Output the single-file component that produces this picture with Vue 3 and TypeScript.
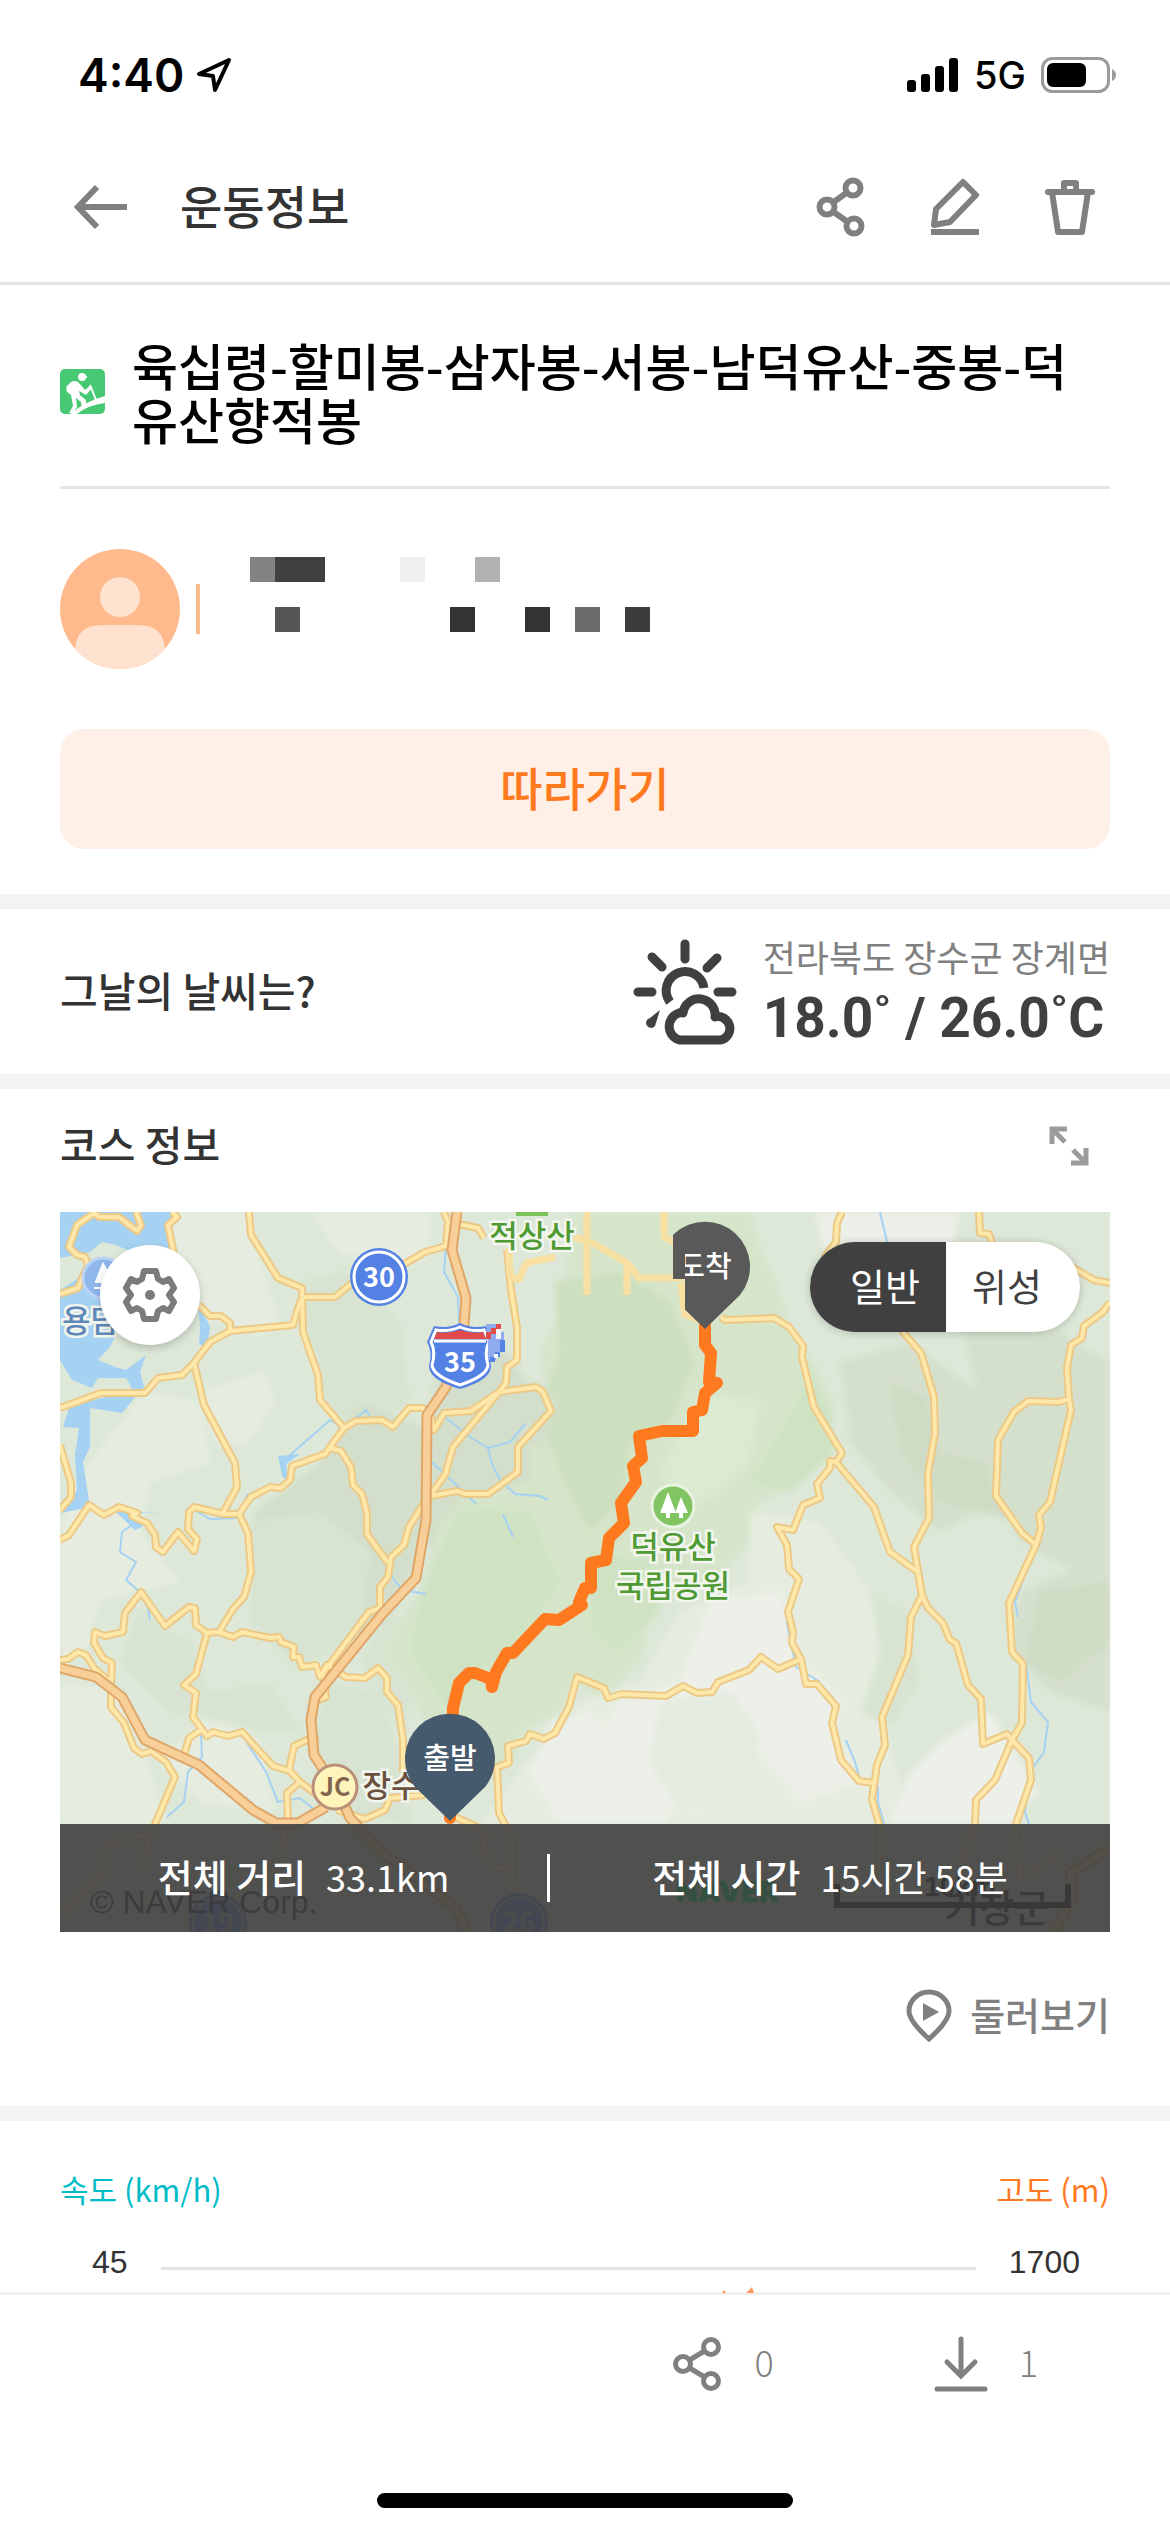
<script setup lang="ts">
import { ref } from 'vue'

type MapKind = 'normal' | 'satellite'

interface MaskCell {
  col: number
  span: number
  color: string
}

const title = '육십령-할미봉-삼자봉-서봉-남덕유산-중봉-덕유산향적봉'
const mapKind = ref<MapKind>('normal')

const maskRows: MaskCell[][] = [
  [
    { col: 3, span: 1, color: '#838383' },
    { col: 4, span: 2, color: '#404040' },
    { col: 9, span: 1, color: '#efefef' },
    { col: 12, span: 1, color: '#b2b2b2' },
  ],
  [
    { col: 4, span: 1, color: '#565656' },
    { col: 11, span: 1, color: '#333333' },
    { col: 14, span: 1, color: '#333333' },
    { col: 16, span: 1, color: '#6b6b6b' },
    { col: 18, span: 1, color: '#3c3c3c' },
  ],
]

const hills: { fill: string; points: string }[] = [
  { fill: '#e6ede0', points: '115,0 190,0 195,30 218,110 200,125 150,105 110,60' },
  { fill: '#e6ede0', points: '250,0 370,0 370,45 330,60 280,40' },
  { fill: '#e6ede0', points: '85,180 140,190 150,250 90,270 80,320 120,370 30,390 0,400 0,310 30,250' },
  { fill: '#e6ede0', points: '170,170 205,160 215,190 185,235 155,230 140,180' },
  { fill: '#e6ede0', points: '0,385 38,390 30,430 0,460' },
  { fill: '#e6ede0', points: '0,470 60,480 90,560 105,612 0,612' },
  { fill: '#e6ede0', points: '150,500 200,530 215,600 140,590 100,550' },
  { fill: '#d8e4d1', points: '240,70 300,55 340,110 350,190 300,220 262,190 250,130' },
  { fill: '#d3dfca', points: '300,190 365,215 365,320 335,400 300,430 240,390 190,330 195,300 260,250' },
  { fill: '#d8e4d1', points: '190,310 260,300 310,340 300,420 240,460 190,410' },
  { fill: '#d3dfca', points: '380,130 440,130 480,190 490,240 460,330 400,380 366,330 370,200' },
  { fill: '#d8e4d1', points: '80,400 130,430 150,480 210,470 240,520 180,515 110,500 60,450' },
  { fill: '#d8e4d1', points: '270,470 320,480 345,560 350,612 270,600 250,530' },
  { fill: '#d8e4d1', points: '330,400 360,450 345,520 300,450' },
  { fill: '#d6e5ca', points: '515,0 690,0 700,35 720,80 735,130 755,150 775,195 770,230 745,270 700,290 690,330 650,370 610,385 585,410 585,440 560,470 540,490 515,470 500,500 460,520 455,545 425,570 400,560 370,520 345,470 322,441 345,400 358,385 380,310 400,290 470,270 470,230 490,190 480,140 500,100' },
  { fill: '#ccdfbe', points: '495,70 560,60 610,90 635,150 610,210 570,230 560,290 530,320 500,260 480,200 500,140' },
  { fill: '#cfe3c3', points: '400,295 470,300 500,370 460,430 430,450 390,500 350,440 360,385' },
  { fill: '#cfe3c3', points: '750,165 770,200 775,240 730,280 690,270 720,220' },
  { fill: '#cfe3c3', points: '530,340 590,350 600,400 560,440 530,420' },
  { fill: '#dce9d3', points: '640,180 700,190 690,250 660,280 620,300 600,260' },
  { fill: '#d3dfca', points: '430,180 480,170 500,190 480,240 440,210' },
  { fill: '#edf0e8', points: '755,0 900,0 890,40 830,80 770,60' },
  { fill: '#d5e0cc', points: '780,150 850,130 920,180 960,240 940,290 880,320 830,280 790,230' },
  { fill: '#cfdbc4', points: '830,170 865,185 880,240 990,265 1050,240 1050,290 960,310 880,290 840,240' },
  { fill: '#d5e0cc', points: '900,110 1000,120 1050,150 1050,380 960,330 930,270 920,190' },
  { fill: '#d5e0cc', points: '960,380 1050,340 1050,500 990,480 950,440' },
  { fill: '#cfdbc4', points: '980,380 1050,370 1050,430 1000,470 965,450' },
  { fill: '#e6ede0', points: '690,300 760,310 810,380 850,420 820,490 850,612 420,612 460,560 520,490 580,470 620,400 690,370' },
  { fill: '#edf0e8', points: '650,390 720,380 735,440 780,490 770,520 800,570 740,590 700,540 640,600 560,600 520,550 560,490 620,470' },
  { fill: '#edf0e8', points: '490,510 530,500 570,540 610,612 500,612 470,560' },
  { fill: '#edf0e8', points: '850,560 880,530 930,500 980,580 950,612 830,612' },
  { fill: '#e4ebdf', points: '600,490 670,480 700,520 690,590 620,600 590,550' },
  { fill: '#d8e4d1', points: '810,380 850,400 860,470 830,515 800,500 820,440' },
]

const lakes: string[] = [
  '0,0 18,0 0,26',
  '18,0 112,0 108,15 113,36 104,46 72,40 56,33 42,30 30,40 0,46 0,26',
  '0,78 28,60 45,60 62,110 50,135 38,148 55,155 66,158 86,143 80,160 84,175 62,201 30,196 30,235 23,250 30,295 1,301 17,278 15,243 19,216 3,215 10,193 60,182 72,176 66,166 38,166 32,176 12,168 0,148',
  '138,90 150,115 147,135 139,132 140,115',
  '218,244 240,242 226,252 229,270 222,264',
  '100,300 56,300 75,318 88,312 78,301',
]

const streams: string[] = [
  '76,310 62,320 60,340 76,350 66,368 86,385 90,408',
  '188,282 180,300 175,306 150,307 138,300',
  '228,245 270,208 284,216 306,198 310,205',
  '386,206 410,225 428,236 450,230 465,212',
  '428,236 432,252 440,268 455,282 480,284 488,288',
  '386,34 384,60 398,85 399,112',
  '372,250 393,270 416,292',
  '443,302 453,325',
  '330,362 342,378 366,382',
  '184,526 206,560 218,590 240,586 262,604',
  '141,520 142,545 128,560 124,590 107,605',
  '820,0 827,30',
  '727,393 727,412 736,455 760,470',
  '786,528 795,550 800,568 818,575 818,590 824,612',
  '876,400 902,450 918,490 921,520',
  '974,340 966,360 955,390 958,405',
  '966,450 971,490 988,510 984,540 970,560 965,600 975,630 968,665',
]

const roads: string[] = [
  '76,0 81,13 77,19 59,5 39,5 34,1 17,13 9,35 17,43 25,45 28,53 18,76 0,82',
  '112,0 117,5 108,13 114,42',
  '139,93 150,104 161,104 170,111 170,119 233,113 240,90 244,85 275,85 292,71 346,51 365,40 386,34 388,10 384,0',
  '388,10 418,16 424,26',
  '189,0 191,23 218,66 242,76 243,120 258,163 260,188 284,216',
  '170,119 150,130 134,151 122,163 98,166 85,181 41,181 0,196',
  '134,151 144,193 175,251 177,275 163,301',
  '0,233 11,271 11,285 0,298',
  '0,328 9,323 29,293 44,303 59,295 77,301 72,304 87,311 95,323 96,335 103,340 118,320 134,339 137,327 128,317 129,300 134,295 163,302 179,302 191,285 210,275 221,276 230,268 232,254 265,242 284,216 296,209 322,208 333,215 349,196 363,196 371,205 374,218 384,201 411,199 439,180 476,175 483,180 491,199 458,235 458,260 428,282 405,282 397,279 371,284',
  '439,180 446,171 447,155 457,148 457,115 451,78 447,38',
  '439,180 393,235 385,263 363,293 349,315 344,333 331,345 328,365 320,375 320,396 309,400 263,461 266,485 258,488',
  '270,236 281,239 291,255 293,273 302,282 307,301 307,322 328,351',
  '179,302 188,321 191,360 184,385 173,397 159,420',
  '0,448 8,447 18,440 26,443 34,456 51,471 51,495 64,511 74,536 82,542 91,539 106,550 115,565 95,612 87,635 85,661',
  '0,703 43,661 47,634 74,625 89,623',
  '51,471 52,451 43,446 34,431 35,420 45,424 63,420 65,401 81,380 105,414 129,395 135,396 136,413 147,421 159,420 173,425 182,420 210,426 219,425 221,430 234,435 233,445 239,445 242,455 256,453 260,465 267,453 286,465 305,466 318,456 327,466 327,480 338,493 343,528 343,561',
  '147,421 136,462 124,473 136,481 133,505 141,516 147,524 153,520 168,524 182,520 213,554 230,559 240,570 260,585',
  '141,518 129,526 124,543',
  '258,523 234,534 229,558',
  '240,570 227,581 228,612 221,638 204,678',
  '277,598 305,607 325,598 330,586 365,583',
  '395,605 426,619 422,638 434,655 449,658 457,681',
  '453,668 453,628 439,601 437,555 449,551 448,534 466,529 470,522 484,527 495,521 509,495 517,465 544,476 548,486 562,482 606,484 623,474 637,481 652,480 658,470 689,458 701,445 718,457 741,447',
  '661,105 665,108 714,106 729,115 743,134 742,145 754,195 782,241 776,250 814,295 830,340 858,360 862,383',
  '776,250 770,249 770,256 757,272 760,286 743,293 733,318 717,315 727,333 729,357 739,367 728,400 733,420 732,431 741,447 746,472 757,472 776,494 772,511 781,548 799,569 814,571',
  '782,0 777,11 776,30 764,46',
  '835,108 843,120 861,141 874,185 875,221 868,261 869,306 854,335 862,383 851,405 848,443 822,505 825,533 817,553 812,587 819,612 819,658',
  '862,383 868,396 883,411 890,428 896,431 908,473 921,487 923,532 947,522 952,528 935,568 916,588 915,612 900,655',
  '919,0 920,21 929,22 935,40',
  '1010,54 1034,68 1050,71',
  '1050,90 1043,100 1024,114 1022,126 1011,133 1007,156 1009,187 1011,198 990,290 979,303 981,316 976,333 949,391 952,440 963,452 962,511 952,528 969,546 971,568 956,612 960,668',
  '1009,187 999,190 968,189 954,200 938,228 936,284 962,321 976,333',
  '960,665 995,645 1005,658',
]

const softRoads: string[] = [
  '527,0 527,83',
  '514,25 533,31 567,51 579,66 628,66',
  '567,51 567,83',
  '604,0 604,25 615,31',
  '621,71 625,103 640,108',
  '449,36 450,64 459,68 466,51 495,45',
]

const highways: string[] = [
  '397,0 392,38 406,86 404,113 386,175 367,203 366,308 356,366 323,401 255,485 251,508 254,543 265,560',
  '0,456 36,465 62,485 85,528 139,553 193,598 216,611 238,611 266,595',
  '283,590 290,606 323,641 395,695 407,720',
  '1050,636 1011,661 1011,688 994,720',
]

const route =
  '645,113 645,133 651,141 649,170 657,171 645,181 642,198 633,200 633,219 602,219 579,224 582,246 573,254 576,270 561,291 564,311 549,326 546,348 531,351 531,376 525,376 519,390 522,393 499,408 485,407 453,441 447,441 436,460 432,475 431,467 415,461 409,461 399,471 393,496 390,606'
</script>

<template>
  <div class="page">
    <div class="status">
      <div class="status-side">
        <span class="clock">4:40</span>
        <svg width="36" height="36" viewBox="0 0 36 36" fill="none" stroke="#000" stroke-width="4" stroke-linejoin="round">
          <path d="M33 3 L3 17 L17 19 L19 33 Z" />
        </svg>
      </div>
      <div class="status-side right">
        <svg width="52" height="36" viewBox="0 0 52 36">
          <rect x="0" y="23" width="9" height="12" rx="3" />
          <rect x="14" y="17" width="9" height="18" rx="3" />
          <rect x="28" y="9" width="9" height="26" rx="3" />
          <rect x="42" y="1" width="9" height="34" rx="3" />
        </svg>
        <span class="network">5G</span>
        <svg width="75" height="38" viewBox="0 0 75 38">
          <rect x="1.5" y="2.5" width="66" height="33" rx="10" fill="none" stroke="#9b9b9b" stroke-width="3" />
          <rect x="6" y="7" width="39" height="24" rx="6" />
          <path d="M71 13 q4 2 4 6 q0 4 -4 6 z" fill="#9b9b9b" />
        </svg>
      </div>
    </div>

    <header class="appbar">
      <button class="icon-btn" type="button" aria-label="뒤로">
        <svg width="54" height="46" viewBox="0 0 54 46" fill="none" stroke="#808080" stroke-width="6">
          <path d="M53 23 H4 M23 3 L4 23 L23 43" />
        </svg>
      </button>
      <h1>운동정보</h1>
      <div class="actions">
        <button class="icon-btn" type="button" aria-label="공유">
          <svg width="50" height="60" viewBox="0 0 50 60" fill="none" stroke="#808080" stroke-width="6">
            <circle cx="11" cy="30" r="7.5" /><circle cx="37" cy="11" r="7.5" /><circle cx="38" cy="49" r="7.5" />
            <path d="M17 25.500 L31 15.500 M17 34.500 L31 44.500" />
          </svg>
        </button>
        <button class="icon-btn" type="button" aria-label="편집">
          <svg width="50" height="60" viewBox="0 0 50 60" fill="none" stroke="#808080" stroke-width="6" stroke-linejoin="round">
            <path d="M33 5 L46 18 L20 45 L4 48 L6 32 Z" /><path d="M1 55 H49" />
          </svg>
        </button>
        <button class="icon-btn" type="button" aria-label="삭제">
          <svg width="52" height="60" viewBox="0 0 52 60" fill="none" stroke="#808080" stroke-width="6" stroke-linejoin="round" stroke-linecap="round">
            <path d="M4 15 H48 M8 15 L14 55 H38 L44 15 M20 14 V6 H32 V14" />
          </svg>
        </button>
      </div>
    </header>

    <main class="content">
      <section class="summary">
        <div class="title-row">
          <svg class="hiker" width="45" height="45" viewBox="0 0 45 45">
            <rect width="45" height="45" rx="5" fill="#47c872" />
            <circle cx="22" cy="8" r="4" fill="#fff" /><path d="M20 5 L27 7 V9 H20Z" fill="#fff" />
            <path d="M11 13 Q16 10 20 15 L25 21 L30 17 L32 19 L26 26 L19 22 L20 26 L26 31 L26 39 L22 41 L21 33 L16 29 L17 38 L13 44 L9 44 L13 37 L11 26 Q4 22 7 17 Z" fill="#fff" />
            <path d="M30 16 L36 31" stroke="#fff" stroke-width="2" />
            <path d="M10 45 Q26 32 45 27 V34 Q28 36 17 45 Z" fill="#fff" />
          </svg>
          <h2>{{ title }}</h2>
        </div>
        <hr />
        <div class="profile">
          <svg width="120" height="120" viewBox="0 0 120 120">
            <defs><clipPath id="face"><circle cx="60" cy="60" r="60" /></clipPath></defs>
            <g clip-path="url(#face)">
              <rect width="120" height="120" fill="#feb98c" />
              <circle cx="60" cy="48" r="20" fill="#ffe1cf" />
              <path d="M15 120 V103 Q15 76 42 76 H78 Q105 76 105 103 V120 Z" fill="#ffe1cf" />
            </g>
          </svg>
          <span class="bar" />
          <div class="mask">
            <div v-for="(row, r) in maskRows" :key="r" class="mask-row">
              <span
                v-for="cell in row"
                :key="cell.col"
                :style="{ gridColumn: cell.col + ' / span ' + cell.span, background: cell.color }"
              />
            </div>
          </div>
        </div>
        <button class="follow" type="button">따라가기</button>
      </section>

      <section class="weather">
        <h3>그날의 날씨는?</h3>
        <div class="weather-info">
          <svg width="104" height="106" viewBox="0 0 104 106" fill="none" stroke="#404040" stroke-width="9" stroke-linecap="round">
            <path d="M52 5 V20 M19 18 L29 28 M84 19 L74 29 M5 53 H19 M85 53 H99" />
            <path d="M37 63 A19 19 0 1 1 71 49" stroke-linecap="butt" />
            <path d="M27 71 L17 79 A5 5 0 1 0 22 87 Z" fill="#404040" stroke="none" />
            <path d="M47 101 A14 14 0 0 1 46 74 Q48 73 50 74 A16 16 0 0 1 82 78 A11.500 11.500 0 1 1 88 101 Z" stroke-linejoin="round" />
          </svg>
          <div class="weather-text">
            <p class="place">전라북도 장수군 장계면</p>
            <p class="temp">18.0˚ / 26.0˚C</p>
          </div>
        </div>
      </section>

      <section class="course">
        <div class="course-head">
          <h3>코스 정보</h3>
          <button class="icon-btn" type="button" aria-label="지도 확대">
            <svg width="42" height="42" viewBox="0 0 42 42" fill="none" stroke="#9b9b9b" stroke-width="5">
              <path d="M4 19 V4 H19 M4 4 L17 17 M38 23 V38 H23 M38 38 L25 25" />
            </svg>
          </button>
        </div>

        <div class="map">
          <svg class="map-canvas" viewBox="0 0 1050 720" role="img" aria-label="코스 지도">
            <defs>
              <clipPath id="endClip"><path d="M613 0 H700 V120 H625 V67 H613 Z" /></clipPath>
              <clipPath id="endTextClip"><rect x="625" y="20" width="60" height="60" /></clipPath>
              <filter id="soften" x="-5%" y="-5%" width="110%" height="110%"><feGaussianBlur stdDeviation="3" /></filter>
            </defs>
            <rect width="1050" height="720" fill="#dde8d8" />
            <g filter="url(#soften)">
              <polygon v-for="(h, i) in hills" :key="i" :points="h.points" :fill="h.fill" />
            </g>
            <polygon v-for="(l, i) in lakes" :key="i" :points="l" fill="#a5d2f3" />
            <g fill="none" stroke="#a5d2f3" stroke-width="2">
              <polyline v-for="(s, i) in streams" :key="i" :points="s" />
            </g>
            <g fill="none" stroke-linejoin="round">
              <g stroke="#ecc987" stroke-width="8"><polyline v-for="(r, i) in roads" :key="i" :points="r" /></g>
              <g stroke="#fde8aa" stroke-width="4"><polyline v-for="(r, i) in roads" :key="i" :points="r" /></g>
              <g stroke="#f8dfa2" stroke-width="7" stroke-linejoin="bevel"><polyline v-for="(r, i) in softRoads" :key="i" :points="r" /></g>
              <g stroke="#dfa668" stroke-width="11"><polyline v-for="(r, i) in highways" :key="i" :points="r" /></g>
              <g stroke="#f8cf98" stroke-width="7"><polyline v-for="(r, i) in highways" :key="i" :points="r" /></g>
            </g>

            <rect x="456" y="0" width="32" height="4" fill="#7cc25c" />
            <text class="label park" x="472" y="35">적상산</text>

            <circle cx="43" cy="66" r="20" fill="#90b7ec" stroke="#bcd4f4" stroke-width="3" />
            <path d="M43 52 L53 70 H36 Z M34 76 H52" fill="#fff" stroke="#fff" stroke-width="2" />
            <text class="label water" x="2" y="120">용담</text>

            <g class="shield">
              <circle cx="319" cy="65" r="29" fill="#5381e4" />
              <circle cx="319" cy="65" r="25" fill="none" stroke="#fff" stroke-width="3" />
              <text x="319" y="75">30</text>
            </g>
            <g class="shield">
              <path d="M374 114 Q388 117 400 111 Q412 117 426 114 L433 130 Q427 140 431 154 Q431 168 400 177 Q369 168 369 154 Q373 140 367 130 Z" fill="#5381e4" />
              <path d="M376 118 Q389 120 400 115 Q411 120 424 118 L429 130 Q424 140 428 153 Q427 164 400 173 Q373 164 372 153 Q376 140 371 130 Z" fill="#5381e4" stroke="#fff" stroke-width="3" />
              <path d="M377 120 Q389 122 400 118 Q411 122 423 120 L426 127 H374 Z" fill="#e24a4a" />
              <path d="M374 129 H426" stroke="#fff" stroke-width="3" />
              <path d="M426 112 h14 v8 h4 v20 h-8 v8 h-8 v-16 z" fill="#8fabed" />
              <path d="M426 120 h5 v-4 h5 v-4 h5 v5 h-5 v5 h-5 v5 h-5z" fill="#e24a4a" />
              <path d="M440 128 h5 v12 h-5 v5 h-5 v5 h-5 v-5 h5 v-5 h5z" fill="#5381e4" />
              <path d="M436 117 h5 v10 h-5z M434 142 h4 v4 h-4z" fill="#f4f7fe" />
              <text x="400" y="160">35</text>
            </g>

            <circle cx="613" cy="294" r="21" fill="#80c561" stroke="#e8f3e0" stroke-width="3" />
            <path d="M608 280 L600 301 H606 V306 H610 V301 H616 Z M621 285 L615 301 H619 V306 H623 V301 H628 Z" fill="#fff" />
            <text class="label park" x="613" y="346">덕유산</text>
            <text class="label park" x="613" y="385">국립공원</text>

            <text class="label town" x="331" y="585">장수</text>
            <circle cx="275" cy="575" r="22" fill="#fff4ba" stroke="#b9917a" stroke-width="3" />
            <text class="jc" x="275" y="584">JC</text>

            <g class="shield">
              <circle cx="158" cy="711" r="29" fill="#5381e4" />
              <circle cx="158" cy="711" r="25" fill="none" stroke="#bbb" stroke-width="3" />
              <text class="dim" x="158" y="720">19</text>
              <circle cx="459" cy="710" r="29" fill="#5381e4" />
              <circle cx="459" cy="710" r="25" fill="none" stroke="#bbb" stroke-width="3" />
              <text class="dim" x="459" y="720">26</text>
            </g>

            <polyline :points="route" fill="none" stroke="#ff7a1f" stroke-width="12" stroke-linejoin="round" stroke-linecap="round" />

            <g clip-path="url(#endClip)">
              <path d="M645 117 L610 83 A45 45 0 1 1 680 83 Z" fill="#595959" />
              <text class="pin" x="645" y="65" clip-path="url(#endTextClip)">도착</text>
            </g>
            <path d="M390 609 L355 575 A45 45 0 1 1 425 575 Z" fill="#455a6c" />
            <text class="pin" x="390" y="557">출발</text>

            <rect x="0" y="612" width="1050" height="108" fill="#404040" fill-opacity="0.9" />
            <text class="credit" x="30" y="701">© NAVER Corp.</text>
            <rect x="606" y="658" width="143" height="43" rx="21" fill="none" stroke="#555" stroke-width="1" />
            <text class="naver" x="667" y="690">NAVER</text>
            <text class="scale" x="900" y="684">10km</text>
            <text class="county" x="937" y="710">거창군</text>
            <path d="M777 672 V693 H1008 V672" fill="none" stroke="#383838" stroke-width="6" />
          </svg>

          <button class="gear" type="button" aria-label="지도 설정">
            <svg width="54" height="56" viewBox="0 0 54 56" fill="none" stroke="#7b7b7b" stroke-width="6" stroke-linejoin="round">
              <path d="M21 4 H33 L35 12 L40 15 L46 12 L51 21 L46 28 L51 35 L46 44 L40 41 L35 44 L33 52 H21 L19 44 L14 41 L8 44 L3 35 L8 28 L3 21 L8 12 L14 15 L19 12 Z" />
              <circle cx="27" cy="28" r="5" fill="#7b7b7b" stroke="none" />
            </svg>
          </button>

          <div class="toggle">
            <button type="button" :class="{ on: mapKind === 'normal' }" @click="mapKind = 'normal'">일반</button>
            <button type="button" :class="{ on: mapKind === 'satellite' }" @click="mapKind = 'satellite'">위성</button>
          </div>

          <div class="totals">
            <p><strong>전체 거리</strong><span>33.1km</span></p>
            <i />
            <p><strong>전체 시간</strong><span>15시간 58분</span></p>
          </div>
        </div>

        <div class="tour-row">
          <button class="tour" type="button">
            <svg width="46" height="54" viewBox="0 0 46 54" fill="none" stroke="#808080" stroke-width="5">
              <path d="M23 50 Q3 32 3 22 A20 19 0 0 1 43 22 Q43 32 23 50 Z" />
              <path d="M17 14 L33 23 L17 32 Z" fill="#808080" stroke="none" />
            </svg>
            <span>둘러보기</span>
          </button>
        </div>
      </section>

      <section class="chart">
        <div class="chart-head">
          <span class="speed">속도 (km/h)</span>
          <span class="altitude">고도 (m)</span>
        </div>
        <div class="axis">
          <span class="tick">45</span>
          <span class="gridline" />
          <span class="tick">1700</span>
          <svg class="peaks" width="40" height="6" viewBox="0 0 40 6">
            <path d="M0 6 L2 3 L4 6 Z M24 6 L30 0 L32 6 Z" fill="#ff9c5a" />
          </svg>
        </div>
      </section>
    </main>

    <footer class="bottom">
      <div class="counts">
        <button class="count" type="button" aria-label="공유 수">
          <svg width="50" height="56" viewBox="0 0 50 56" fill="none" stroke="#808080" stroke-width="5">
            <circle cx="10" cy="28" r="7.500" /><circle cx="38" cy="11" r="7.500" /><circle cx="38" cy="45" r="7.500" />
            <path d="M16.500 24 L31.500 15 M16.500 32 L31.500 41" />
          </svg>
          <span>0</span>
        </button>
        <button class="count" type="button" aria-label="내려받기 수">
          <svg width="54" height="56" viewBox="0 0 54 56" fill="none" stroke="#808080" stroke-width="5" stroke-linecap="round">
            <path d="M27 3 V38 M13 26 L27 40 L41 26 M3 53 H51" />
          </svg>
          <span>1</span>
        </button>
      </div>
      <div class="home" />
    </footer>
  </div>
</template>

<style>
body {
  margin: 0;
  background: #fff;
}
</style>

<style scoped>
.page {
  display: flex;
  flex-direction: column;
  min-height: 100vh;
  background: #fff;
  color: #333;
  font-family: 'Noto Sans CJK KR', sans-serif;
}
h1, h2, h3, p, hr {
  margin: 0;
}
svg {
  display: block;
  flex: none;
}
button {
  padding: 0;
  border: 0;
  background: none;
  color: inherit;
  font: inherit;
  cursor: pointer;
}
.status {
  display: flex;
  align-items: center;
  justify-content: space-between;
  height: 114px;
  padding: 18px 54px 0 78px;
}
.status-side {
  display: flex;
  align-items: center;
  gap: 12px;
  color: #000;
}
.status-side.right {
  gap: 15px;
}
.clock {
  font: 600 46px/48px Inter, sans-serif;
}
.network {
  font: 500 38px/40px Inter, sans-serif;
}
.appbar {
  display: flex;
  align-items: center;
  height: 150px;
  padding: 0 74px;
  border-bottom: 3px solid #e2e2e2;
}
.appbar h1 {
  margin-left: 52px;
  padding-bottom: 6px;
  font-size: 46px;
  font-weight: 500;
  line-height: 60px;
}
.actions {
  display: flex;
  gap: 64px;
  margin-left: auto;
}
.content {
  display: flex;
  flex: 1;
  flex-direction: column;
}
.summary {
  padding: 52px 60px 45px;
  border-bottom: 15px solid #f1f3f5;
}
.title-row {
  display: flex;
  align-items: center;
  gap: 27px;
}
.title-row h2 {
  padding-right: 24px;
  color: #000;
  font-size: 50px;
  font-weight: 500;
  line-height: 54px;
  word-break: break-all;
}
.summary hr {
  height: 3px;
  margin-top: 41px;
  border: 0;
  background: #e5e5e5;
}
.profile {
  display: flex;
  align-items: center;
  margin-top: 60px;
}
.bar {
  width: 4px;
  height: 50px;
  margin-left: 16px;
  background: #fcb98b;
}
.mask {
  display: grid;
  gap: 25px;
  padding-bottom: 29px;
}
.mask-row {
  display: grid;
  grid-template-columns: repeat(18, 25px);
  grid-template-rows: 25px;
}
.follow {
  width: 100%;
  height: 120px;
  margin-top: 60px;
  padding-bottom: 6px;
  border-radius: 24px;
  background: #fff0e7;
  color: #ff7a1f;
  font-size: 46px;
  font-weight: 500;
}
h3 {
  padding-bottom: 6px;
  font-size: 41px;
  font-weight: 500;
  line-height: 56px;
}
.weather {
  display: flex;
  align-items: center;
  justify-content: space-between;
  height: 165px;
  padding: 0 60px;
  border-bottom: 15px solid #f1f3f5;
}
.weather-info {
  display: flex;
  align-items: center;
  gap: 26px;
}
.weather-text {
  padding-bottom: 4px;
}
.place {
  color: #808080;
  font-size: 36px;
  line-height: 56px;
}
.temp {
  color: #404040;
  font: 700 55px/68px Roboto, sans-serif;
}
.course {
  padding: 0 60px;
}
.course-head {
  display: flex;
  align-items: center;
  justify-content: space-between;
  height: 114px;
  padding: 0 20px 9px 0;
}
.map {
  position: relative;
}
.map-canvas {
  width: 100%;
  height: auto;
}
.map-canvas text {
  text-anchor: middle;
}
.label {
  font-size: 31px;
  font-weight: 500;
  paint-order: stroke;
  stroke: #f2f6ee;
  stroke-width: 5px;
}
.label.park {
  fill: #4f9a33;
}
.map-canvas .label.water {
  fill: #5f88b8;
  text-anchor: start;
}
.label.town {
  fill: #69503f;
}
.jc {
  fill: #846650;
  font: 700 25px 'Noto Sans CJK KR', sans-serif;
}
.shield text {
  fill: #fff;
  font-size: 27px;
  font-weight: 700;
}
.shield text.dim {
  fill: #bbb;
}
.pin {
  fill: #fff;
  font-size: 29px;
  font-weight: 500;
}
.map-canvas .credit {
  fill: #3c3c3c;
  font: 32px 'Liberation Sans', sans-serif;
  text-anchor: start;
}
.naver {
  fill: #345040;
  font: 900 29px Inter, sans-serif;
}
.scale {
  fill: #383838;
  font: 700 28px 'Liberation Sans', sans-serif;
}
.county {
  fill: #3a3a3a;
  font-size: 38px;
  font-weight: 500;
}
.gear {
  position: absolute;
  top: 33px;
  left: 40px;
  display: grid;
  place-items: center;
  width: 100px;
  height: 100px;
  border-radius: 50%;
  background: #fff;
  box-shadow: 0 3px 8px rgba(0, 0, 0, 0.2);
}
.toggle {
  position: absolute;
  top: 30px;
  right: 30px;
  display: flex;
  overflow: hidden;
  width: 270px;
  height: 90px;
  border-radius: 45px;
  background: #fff;
  box-shadow: 0 1px 8px rgba(0, 0, 0, 0.2);
}
.toggle button {
  flex: 1;
  padding: 0 12px 6px 0;
  color: #404040;
  font-size: 38px;
}
.toggle button:first-child {
  padding: 0 0 6px 14px;
}
.toggle button.on {
  background: #404040;
  color: #fff;
}
.totals {
  position: absolute;
  right: 0;
  bottom: 0;
  left: 0;
  display: grid;
  grid-template-columns: 487px 3px 1fr;
  align-items: center;
  height: 108px;
  color: #fff;
  font-size: 36px;
}
.totals p {
  display: flex;
  align-items: baseline;
  justify-content: center;
  gap: 20px;
  padding-bottom: 6px;
}
.totals strong {
  font-size: 38px;
  font-weight: 500;
}
.totals i {
  height: 48px;
  background: #fff;
}
.tour-row {
  display: flex;
  justify-content: flex-end;
  height: 174px;
}
.tour {
  display: flex;
  align-items: center;
  gap: 18px;
  height: 168px;
  color: #808080;
  font-size: 38px;
  font-weight: 500;
}
.tour span {
  padding-bottom: 6px;
}
.chart {
  flex: 1;
  padding: 42px 60px 0;
  border-top: 15px solid #f1f3f5;
}
.chart-head {
  display: flex;
  justify-content: space-between;
  font-size: 31px;
  line-height: 52px;
}
.speed {
  color: #00bcc8;
}
.altitude {
  color: #ff7a1f;
}
.axis {
  position: relative;
  display: flex;
  align-items: center;
  gap: 33px;
  margin-top: 23px;
  padding: 0 30px 0 32px;
  font: 32px/48px 'Liberation Sans', sans-serif;
}
.gridline {
  flex: 1;
  height: 3px;
  margin-top: 12px;
  background: #e2e2e2;
}
.peaks {
  position: absolute;
  bottom: -7px;
  left: 63%;
}
.bottom {
  display: flex;
  flex-direction: column;
  align-items: center;
  justify-content: space-between;
  height: 198px;
  padding: 15px 0 24px;
  border-top: 3px solid #f0f0f0;
}
.counts {
  display: flex;
  align-self: stretch;
  justify-content: flex-end;
  gap: 160px;
  padding-right: 132px;
}
.count {
  display: flex;
  align-items: center;
  gap: 31px;
  height: 108px;
  color: #808080;
  font-size: 36px;
  font-weight: 300;
}
.count span {
  padding-bottom: 6px;
}
.home {
  width: 416px;
  height: 15px;
  border-radius: 8px;
  background: #000;
}
</style>
